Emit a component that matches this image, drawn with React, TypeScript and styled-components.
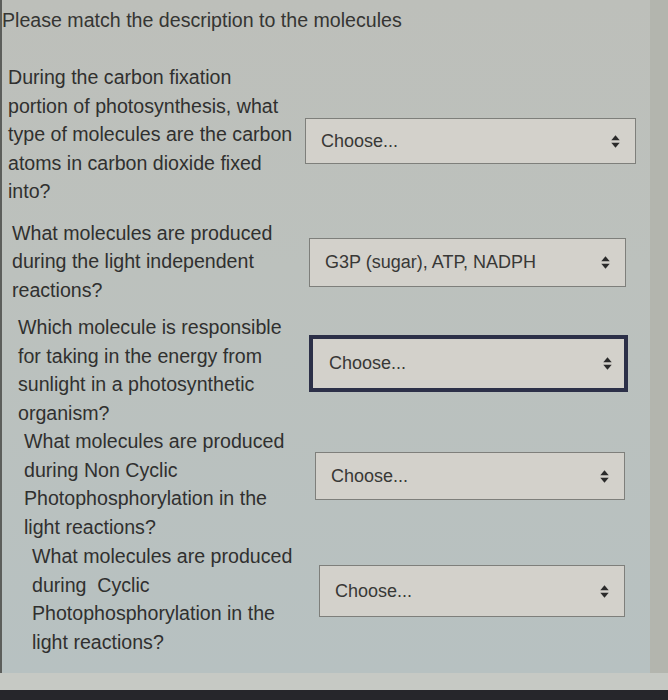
import React from 'react';
import styled, { createGlobalStyle } from 'styled-components';

// Styles
const Global = createGlobalStyle`
  html, body {
    margin: 0;
    padding: 0;
    background: #2b2b30;
  }
  body {
    font-family: 'Liberation Sans', Arial, sans-serif;
  }
`;

const Screen = styled.div`
  display: flex;
  flex-direction: column;
  width: 668px;
  height: 700px;
  overflow: hidden;
  background: #2b2b30;
`;

const Page = styled.main`
  flex: 1;
  display: flex;
  flex-direction: column;
  border-left: 2px solid #5c5e5b;
  border-right: 18px solid #b3b5ae;
  background: linear-gradient(180deg, #bdbfba 0%, #bcc1bd 40%, #b7c1c1 100%);
  color: #2f2f2e;
`;

const Title = styled.h1`
  margin: 0;
  padding: 9px 0 0 0;
  font-size: 19.6px;
  font-weight: normal;
  line-height: 22px;
  color: #353533;
`;

const List = styled.div`
  display: flex;
  flex-direction: column;
  padding: 32px 12px 0 0;
`;

const Row = styled.div<{ $indent: number; $space: number }>`
  display: flex;
  align-items: flex-start;
  margin-top: ${(p) => p.$space}px;
  padding-left: ${(p) => p.$indent}px;
`;

const Question = styled.p<{ $width: number }>`
  flex: none;
  width: ${(p) => p.$width}px;
  margin: 0;
  font-size: 19.6px;
  line-height: 28.5px;
  color: #30302f;
`;

const Select = styled.div<{ $focused?: boolean; $top: number; $height: number; $right: number }>`
  flex: 1;
  display: flex;
  align-items: center;
  justify-content: space-between;
  box-sizing: border-box;
  margin: ${(p) => p.$top}px ${(p) => p.$right}px 0 0;
  height: ${(p) => p.$height}px;
  padding: 0 ${(p) => (p.$focused ? 12 : 15)}px 0 ${(p) => (p.$focused ? 16 : 15)}px;
  border: ${(p) => (p.$focused ? '4px solid #2c3048' : '1px solid #7e7f7b')};
  background: #d3d1cb;
  font-size: 18px;
  color: #383836;
`;

const Arrows = styled.svg`
  flex: none;
  width: 9px;
  height: 13px;
`;

const Sill = styled.div`
  height: 17px;
  background: #c6c9c4;
`;

const Bezel = styled.div`
  height: 10px;
  background: #26262b;
`;

const UpDown = () => (
  <Arrows viewBox="0 0 9 13">
    <path d="M4.5 0.3 L8.7 5.2 L0.3 5.2 Z" fill="#2a2a2a" />
    <path d="M4.5 12.7 L8.7 7.8 L0.3 7.8 Z" fill="#2a2a2a" />
  </Arrows>
);

interface Item {
  question: string[];
  value: string;
  indent: number;
  space: number;
  width: number;
  top: number;
  height: number;
  right: number;
  focused?: boolean;
}

const items: Item[] = [
  {
    question: [
      'During the carbon fixation',
      'portion of photosynthesis, what',
      'type of molecules are the carbon',
      'atoms in carbon dioxide fixed',
      'into?',
    ],
    value: 'Choose...',
    indent: 6,
    space: 0,
    width: 297,
    top: 55,
    height: 46,
    right: 2,
  },
  {
    question: ['What molecules are produced', 'during the light independent', 'reactions?'],
    value: 'G3P (sugar), ATP, NADPH',
    indent: 10,
    space: 13,
    width: 297,
    top: 19,
    height: 49,
    right: 12,
  },
  {
    question: [
      'Which molecule is responsible',
      'for taking in the energy from',
      'sunlight in a photosynthetic',
      'organism?',
    ],
    value: 'Choose...',
    indent: 16,
    space: 9,
    width: 291,
    top: 22,
    height: 57,
    right: 10,
    focused: true,
  },
  {
    question: [
      'What molecules are produced',
      'during Non Cyclic',
      'Photophosphorylation in the',
      'light reactions?',
    ],
    value: 'Choose...',
    indent: 22,
    space: 0,
    width: 291,
    top: 25,
    height: 48,
    right: 13,
  },
  {
    question: [
      'What molecules are produced',
      'during\u00a0 Cyclic',
      'Photophosphorylation in the',
      'light reactions?',
    ],
    value: 'Choose...',
    indent: 30,
    space: 1,
    width: 287,
    top: 23,
    height: 52,
    right: 13,
  },
];

const App: React.FC = () => {
  return (
    <Screen>
      <Global />
      <Page>
        <Title>Please match the description to the molecules</Title>
        <List>
          {items.map((item, i) => (
            <Row key={i} $indent={item.indent} $space={item.space}>
              <Question $width={item.width}>
                {item.question.map((line, j) => (
                  <React.Fragment key={j}>
                    {line}
                    {j < item.question.length - 1 && <br />}
                  </React.Fragment>
                ))}
              </Question>
              <Select
                $focused={item.focused}
                $top={item.top}
                $height={item.height}
                $right={item.right}
              >
                <span>{item.value}</span>
                <UpDown />
              </Select>
            </Row>
          ))}
        </List>
      </Page>
      <Sill />
      <Bezel />
    </Screen>
  );
};

export default App;
